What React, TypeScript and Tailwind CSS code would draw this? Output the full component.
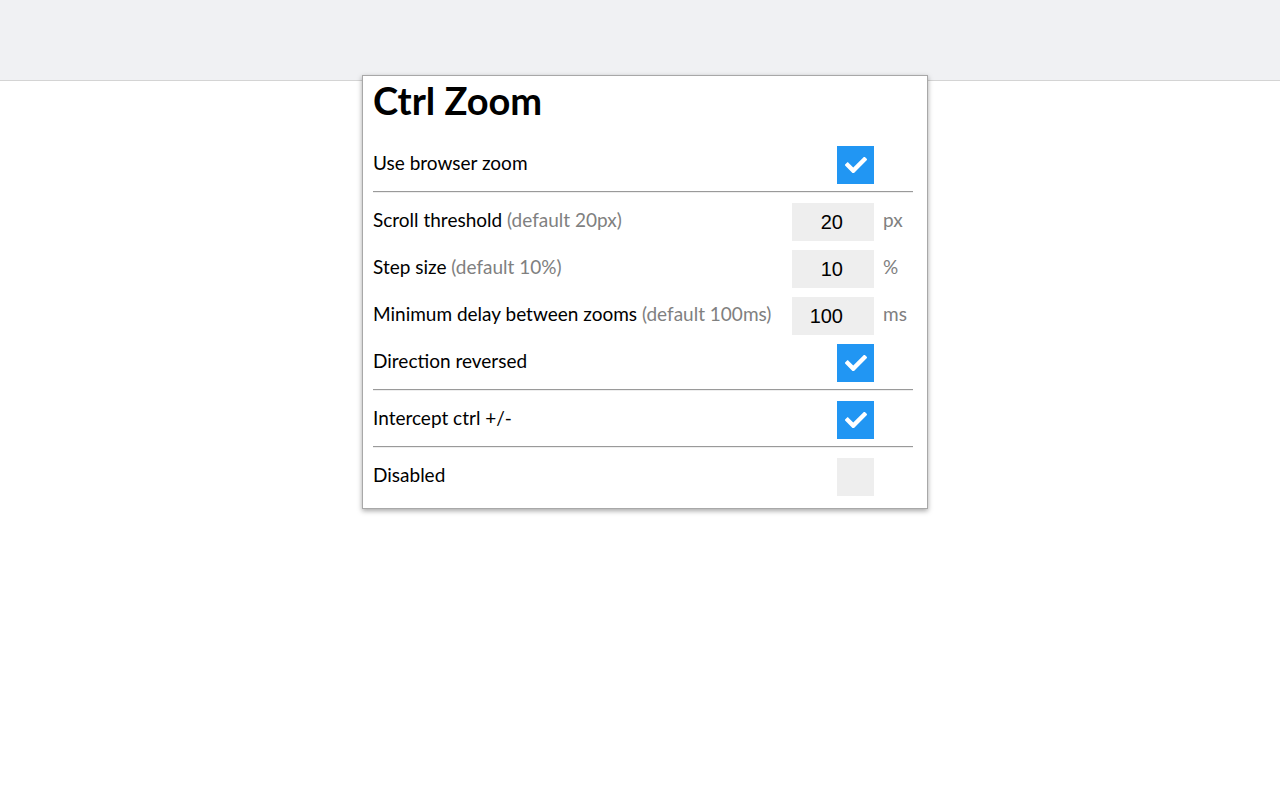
import React from "react";

function Check() {
  return (
    <svg viewBox="0 0 512 370" className="h-[16px] w-[22px]" fill="white">
      <path
        transform="translate(0,-70)"
        d="M173.898 439.404l-166.4-166.4c-9.997-9.997-9.997-26.206 0-36.204l36.203-36.204c9.997-9.998 26.207-9.998 36.204 0L192 312.69 432.095 72.596c9.997-9.997 26.207-9.997 36.204 0l36.203 36.204c9.997 9.997 9.997 26.206 0 36.204l-294.4 294.401c-9.998 9.997-26.207 9.997-36.204-.001z"
      />
    </svg>
  );
}

function Box({ checked }: { checked: boolean }) {
  return (
    <div
      className={`ml-auto flex h-[38px] w-[37px] items-center justify-center ${checked ? "bg-[#2196f3]" : "bg-[#eeeeee]"}`}
    >
      {checked && <Check />}
    </div>
  );
}

function CheckRow({ label, checked }: { label: string; checked: boolean }) {
  return (
    <div className="grid grid-cols-[1fr_82px_39px] items-center">
      <span className="pb-[4px]">{label}</span>
      <Box checked={checked} />
      <span />
    </div>
  );
}

function NumberRow({
  label,
  hint,
  value,
  unit,
}: {
  label: string;
  hint: string;
  value: string;
  unit: string;
}) {
  return (
    <div className="grid grid-cols-[1fr_82px_39px] items-center">
      <span className="pb-[4px]">
        {label} <span className="text-[#808080]">{hint}</span>
      </span>
      <div className="flex h-[38px] items-center justify-end bg-[#eeeeee] pr-[31px] font-['Liberation_Sans',sans-serif] text-[20px] text-black">
        {value}
      </div>
      <span className="pb-[4px] pl-[9px] text-[#808080]">{unit}</span>
    </div>
  );
}

function Rule() {
  return <div className="mt-[7px] mb-[10px] h-[2px] border-t border-t-[#9a9a9a] border-b border-b-[#eeeeee]" />;
}

export default function App() {
  return (
    <div className="min-h-[800px] bg-white font-['Lato',sans-serif] text-[19px] text-black">
      <div className="h-[81px] border-b border-[#d4d4d4] bg-[#f0f1f3]" />
      <div className="relative -mt-[6px] ml-[362px] w-[566px] border border-[#a8a8a8] bg-white pb-[12px] pl-[10px] pr-[14px] shadow-[0_2px_5px_rgba(0,0,0,0.35)]">
        <h1 className="mt-[2px] mb-[24px] text-[38px] font-bold leading-[44px]">Ctrl Zoom</h1>
        <CheckRow label="Use browser zoom" checked />
        <Rule />
        <div className="flex flex-col gap-[9px]">
          <NumberRow label="Scroll threshold" hint="(default 20px)" value="20" unit="px" />
          <NumberRow label="Step size" hint="(default 10%)" value="10" unit="%" />
          <NumberRow label="Minimum delay between zooms" hint="(default 100ms)" value="100" unit="ms" />
          <CheckRow label="Direction reversed" checked />
        </div>
        <Rule />
        <CheckRow label="Intercept ctrl +/-" checked />
        <Rule />
        <CheckRow label="Disabled" checked={false} />
      </div>
    </div>
  );
}
